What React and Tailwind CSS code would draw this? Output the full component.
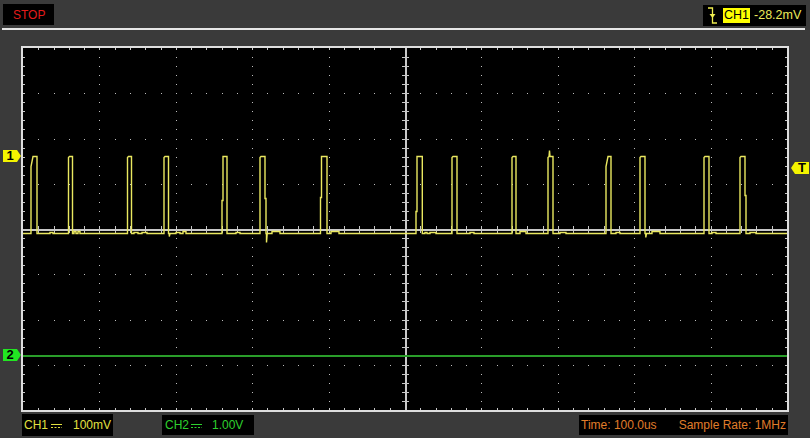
import React from "react";

const W = 764;
const H = 362;
const DX = W / 10;
const DY = H / 8;
const OX = 23; // page x of the screen's inner left edge
const OY = 48; // page y of the screen's inner top edge
const BASE = 233;
const TOP = 156;

// pulses in page coords
const pulses = [
  { a: 31, b: 37, slope: true },
  { a: 68.5, b: 72.5 },
  { a: 127.5, b: 131.5 },
  { a: 164, b: 168.5, dip: 236 },
  { a: 222, b: 227, rise: 200 },
  { a: 260, b: 265, fall: 198, dip: 242 },
  { a: 320.5, b: 327, rise: 197 },
  { a: 416, b: 422.3, rise: 211 },
  { a: 452, b: 457 },
  { a: 512, b: 516 },
  { a: 548, b: 553, spike: 150 },
  { a: 606, b: 611, slope: true },
  { a: 640, b: 645, dip: 237 },
  { a: 704, b: 709 },
  { a: 740, b: 745, fall: 195 },
];

const bumps = [
  [50, 53, 232], [74, 76, 231], [78, 80, 231], [134, 138, 232], [142, 147, 232],
  [176, 180, 232], [183, 186, 231], [236, 240, 232], [272, 280, 231], [331, 339, 231],
  [425, 427, 232], [430, 436, 232], [470, 474, 232], [520, 526, 231], [560, 566, 232],
  [616, 620, 232], [652, 660, 231], [712, 716, 232], [750, 756, 232],
];

function pulsePts(p) {
  const pts = [[p.a, BASE]];
  if (p.rise) pts.push([p.a, p.rise], [p.a + 1, p.rise], [p.a + 1, TOP]);
  else if (p.slope) pts.push([p.a, TOP + 10], [p.a + 2, TOP]);
  else pts.push([p.a, TOP + 1], [p.a + 1, TOP]);
  if (p.spike) pts.push([p.a + 1.5, p.spike], [p.a + 2, TOP]);
  if (p.fall) pts.push([p.b, TOP], [p.b, p.fall], [p.b + 1, p.fall], [p.b + 1, BASE]);
  else pts.push([p.b, TOP], [p.b, BASE]);
  if (p.dip) {
    const x = p.b + (p.fall ? 1.5 : 0.8);
    pts.push([x, BASE], [x, p.dip], [x + 0.7, BASE]);
  }
  return pts;
}

function tracePoints() {
  const feats = [
    ...pulses.map((p) => ({ x: p.a, pts: pulsePts(p) })),
    ...bumps.map(([a, b, y]) => ({ x: a, pts: [[a, BASE], [a, y], [b, y], [b, BASE]] })),
  ].sort((m, n) => m.x - n.x);
  const all = [[OX, BASE]];
  feats.forEach((f) => all.push(...f.pts));
  all.push([OX + W, BASE]);
  return all.map(([x, y]) => `${(x - OX).toFixed(1)},${(y - OY + 0.5).toFixed(1)}`).join(" ");
}

function Grid() {
  const dots = [];
  for (let i = 1; i < 10; i++) {
    if (i === 5) continue;
    for (let k = 1; k < 40; k++) dots.push([Math.round(i * DX), Math.round((k * DY) / 5)]);
  }
  for (let j = 1; j < 8; j++) {
    if (j === 4) continue;
    for (let k = 1; k < 50; k++) dots.push([Math.round((k * DX) / 5), Math.round(j * DY)]);
  }
  const cx = Math.round(W / 2);
  const cy = Math.round(H / 2);
  const ticks = [];
  for (let k = 1; k < 50; k++) {
    const x = Math.round((k * DX) / 5);
    ticks.push(<rect key={`hx${k}`} x={x} y={cy - 3} width="1" height="7" />);
    ticks.push(<rect key={`tt${k}`} x={x} y={0} width="1" height="2" />);
    ticks.push(<rect key={`tb${k}`} x={x} y={H - 2} width="1" height="2" />);
  }
  for (let k = 1; k < 40; k++) {
    const y = Math.round((k * DY) / 5);
    ticks.push(<rect key={`vy${k}`} x={cx - 3} y={y} width="7" height="1" />);
    ticks.push(<rect key={`tl${k}`} x={0} y={y} width="2" height="1" />);
    ticks.push(<rect key={`tr${k}`} x={W - 2} y={y} width="2" height="1" />);
  }
  return (
    <svg width={W} height={H} viewBox={`0 0 ${W} ${H}`} className="block">
      <g fill="#bdbdbd" shapeRendering="crispEdges">
        {dots.map(([x, y], n) => (
          <rect key={n} x={x} y={y} width="1" height="1" />
        ))}
      </g>
      <g fill="#c8c8c8" shapeRendering="crispEdges">
        <rect x={cx} y={0} width="2" height={H} />
        <rect x={0} y={cy} width={W} height="2" />
        {ticks}
      </g>
      <rect x="0" y={355 - OY} width={W} height="2" fill="#2a9e2a" shapeRendering="crispEdges" />
      <polyline points={tracePoints()} fill="none" stroke="#eae860" strokeWidth="1.4" strokeLinejoin="miter" />
    </svg>
  );
}

function DcSign({ color }) {
  return (
    <svg width="11" height="12" viewBox="0 0 11 12" className="block">
      <rect x="0" y="5" width="11" height="1" fill={color} />
      <path d="M0 8.5H11" stroke={color} strokeWidth="1" strokeDasharray="2 1.5" />
    </svg>
  );
}

function Marker({ label, color, left }) {
  const arrow = left
    ? "w-0 h-0 border-y-[6px] border-y-transparent border-r-[4px]"
    : "w-0 h-0 border-y-[6px] border-y-transparent border-l-[4px]";
  return (
    <div className="flex items-center">
      {left && <div className={arrow} style={{ borderRightColor: color }} />}
      <div
        className="w-[14px] h-[12px] text-black text-[13px] font-bold leading-[12px] text-center"
        style={{ backgroundColor: color }}
      >
        {label}
      </div>
      {!left && <div className={arrow} style={{ borderLeftColor: color }} />}
    </div>
  );
}

export default function App() {
  return (
    <div className="w-[810px] h-[438px] bg-[#3a3a3a] overflow-hidden font-['Liberation_Sans',Arial,sans-serif]">
      {/* top bar */}
      <div className="h-[28px] flex justify-between items-start">
        <div className="ml-[3px] mt-[4px] w-[51px] h-[21px] bg-black flex items-center pl-[10px] text-[12px] text-[#e41b1b]">
          STOP
        </div>
        <div className="mr-[4px] mt-[5px] w-[103px] h-[21px] bg-black flex items-center pl-[3px] text-[12.5px]">
          <svg width="13" height="19" viewBox="0 0 13 19" className="block">
            <path d="M2 2H6.5V17H11" fill="none" stroke="#f0ee50" strokeWidth="1.3" />
            <path d="M3.5 8H9.5L6.5 12Z" fill="#f0ee50" />
          </svg>
          <span className="ml-[4px] px-[1px] bg-[#ffff00] text-black leading-[15px]">CH1</span>
          <span className="ml-[4px] text-[#ecea5a]">-28.2mV</span>
        </div>
      </div>
      <div className="h-[2px] ml-[2px] mr-[5px] bg-[#e6e6e6]" />

      {/* screen row */}
      <div className="mt-[16px] flex h-[366px]">
        <div className="w-[21px] relative">
          <div className="absolute left-[3px] top-[104px]">
            <Marker label="1" color="#f4f400" />
          </div>
          <div className="absolute left-[3px] top-[303px]">
            <Marker label="2" color="#22e622" />
          </div>
        </div>
        <div className="w-[768px] border-2 border-[#dedede] bg-black">
          <Grid />
        </div>
        <div className="flex-1 relative">
          <div className="absolute left-[2px] top-[116px]">
            <Marker label="T" color="#f4f400" left />
          </div>
        </div>
      </div>

      {/* bottom bar */}
      <div className="mt-[2px] h-[22px] flex items-center text-[12px]">
        <div className="ml-[22px] w-[91px] h-[22px] bg-black flex items-center px-[2px] text-[#e2e040]">
          <span>CH1</span>
          <span className="ml-[3px]"><DcSign color="#e2e040" /></span>
          <span className="ml-auto">100mV</span>
        </div>
        <div className="ml-[49px] w-[92px] h-[20px] bg-black flex items-center pl-[3px] text-[#2ed02e]">
          <span>CH2</span>
          <span className="ml-[2px]"><DcSign color="#2ed02e" /></span>
          <span className="ml-[10px]">1.00V</span>
        </div>
        <div className="ml-auto mr-[22px] w-[209px] h-[20px] bg-black flex items-center justify-between px-[2px] text-[#e07d2a]">
          <span>Time: 100.0us</span>
          <span>Sample Rate: 1MHz</span>
        </div>
      </div>
    </div>
  );
}
